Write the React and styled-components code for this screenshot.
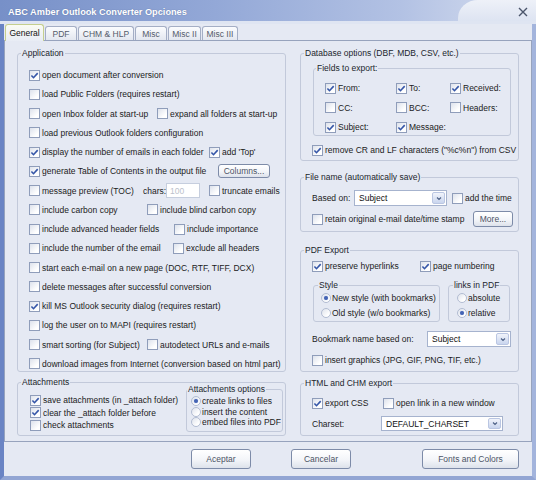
import React from 'react'
import styled, { createGlobalStyle } from 'styled-components'

const GlobalStyle = createGlobalStyle`
  html, body { margin: 0; padding: 0; background: #e5e9f3; }
  body {
    font-family: "Liberation Sans", Arial, sans-serif;
    font-size: 8.5px;
    color: #1b1b1b;
  }
`

const Window = styled.div`
  width: 536px;
  height: 480px;
  box-sizing: border-box;
  background: #e5e9f3;
  border-style: solid;
  border-width: 0 4px 4px 4px;
  border-color: #8fa3d3 #a3b4dc #92a5d3 #6a84c4;
  display: flex;
  flex-direction: column;
`

const TitleBar = styled.div`
  position: relative;
  height: 24px;
  flex-shrink: 0;
  margin: 0 -4px;
  padding: 2px 8px 0;
  box-sizing: border-box;
  display: flex;
  align-items: center;
  justify-content: space-between;
  overflow: hidden;
  background: linear-gradient(90deg, #7790c8 0%, #93a8d7 40%, #b3c2e4 75%, #c6d1ea 88%);
  border-bottom: 3px solid #dfe5f2;

  &::after {
    content: '';
    position: absolute;
    top: 0;
    right: 0;
    width: 78px;
    height: 24px;
    background: linear-gradient(180deg, #eef1f8, #dbe2f1);
    border-top-left-radius: 20px 18px;
  }
`

const Title = styled.span`
  position: relative;
  z-index: 1;
  color: #fff;
  font-size: 9.2px;
  font-weight: bold;
  text-shadow: 0 0 1px rgba(40, 60, 110, 0.5);
`

const Close = styled.svg`
  position: relative;
  z-index: 1;
`

const Tabs = styled.div`
  position: relative;
  z-index: 1;
  flex-shrink: 0;
  display: flex;
  align-items: flex-end;
  height: 16px;
  padding-left: 1px;
`

const Tab = styled.div`
  width: ${p => p.$w}px;
  height: ${p => (p.$active ? 17 : 14)}px;
  margin-right: 1px;
  margin-bottom: ${p => (p.$active ? -1 : 0)}px;
  box-sizing: border-box;
  display: flex;
  align-items: center;
  justify-content: center;
  border: 1px solid ${p => (p.$active ? '#c5cf8e' : '#a4aec5')};
  border-bottom: none;
  border-radius: 3px 3px 0 0;
  color: ${p => (p.$active ? '#111' : '#545b6a')};
  background: ${p => (p.$active
    ? 'linear-gradient(180deg, #fbfcf3, #e8ecf5)'
    : 'linear-gradient(180deg, #fbfcfe, #e3e7f0)')};
`

const Panel = styled.div`
  height: 402px;
  flex-shrink: 0;
  box-sizing: border-box;
  border: 1px solid #97a3bd;
  padding: 7px 12px 0;
  display: flex;
  gap: 14px;
`

const Column = styled.div`
  display: flex;
  flex-direction: column;
  width: ${p => (p.$w ? `${p.$w}px` : 'auto')};
  flex: ${p => (p.$w ? 'none' : 1)};
`

const Group = styled.fieldset`
  margin: ${p => p.$m || 0};
  padding: 0;
  height: ${p => p.$h}px;
  width: ${p => (p.$w ? `${p.$w}px` : 'auto')};
  box-sizing: border-box;
  border: 1px solid #c2c9da;
  border-radius: 3px;
  min-width: 0;
  flex-shrink: 0;
`

const Legend = styled.legend`
  margin-left: ${p => p.$ml ?? 3}px;
  padding: 0 1px;
  line-height: 10px;
  color: #1b1f2c;
`

const Body = styled.div`
  display: flex;
  flex-direction: ${p => (p.$row ? 'row' : 'column')};
  justify-content: ${p => (p.$row ? 'space-between' : 'flex-start')};
  align-items: flex-start;
  padding: ${p => p.$pad || 0};
  gap: ${p => p.$gap || 0}px;
`

const Row = styled.div`
  display: flex;
  align-items: center;
  height: ${p => p.$h || 14}px;
  margin-top: ${p => p.$mt || 0}px;
  flex-shrink: 0;
  white-space: nowrap;
`

const Item = styled.label`
  display: inline-flex;
  align-items: center;
  gap: ${p => p.$gap ?? 2}px;
  flex-shrink: 0;
  white-space: nowrap;
  width: ${p => (p.$w ? `${p.$w}px` : 'auto')};
  margin-left: ${p => p.$ml || 0}px;
`

const Box = styled.span`
  width: 11px;
  height: 11px;
  box-sizing: border-box;
  border: 1px solid #8f9dba;
  background: linear-gradient(135deg, #dde2ec, #ffffff 75%);
  display: flex;
  align-items: center;
  justify-content: center;
  flex-shrink: 0;
`

const Round = styled.span`
  width: 10px;
  height: 10px;
  box-sizing: border-box;
  border: 1px solid #b2bcd2;
  border-radius: 50%;
  background: linear-gradient(135deg, #dfe3ec, #ffffff 75%);
  display: flex;
  align-items: center;
  justify-content: center;
  flex-shrink: 0;
`

const Dot = styled.span`
  width: 4px;
  height: 4px;
  border-radius: 50%;
  background: #4464b4;
  box-shadow: 0 0 1px #8ea4dc;
`

const Text = styled.span`
  display: inline-block;
  width: ${p => (p.$w ? `${p.$w}px` : 'auto')};
  flex-shrink: 0;
`

const Select = styled.div`
  width: ${p => p.$w}px;
  height: ${p => p.$h || 16}px;
  box-sizing: border-box;
  border: 1px solid #a6b3ce;
  background: #fff;
  display: flex;
  align-items: center;
  justify-content: space-between;
  padding: 1px 1px 1px 4px;
  color: #111;
  flex-shrink: 0;
`

const SelectBtn = styled.span`
  width: 13px;
  height: 100%;
  box-sizing: border-box;
  border: 1px solid #bac6e2;
  border-radius: 2px;
  background: linear-gradient(180deg, #f1f4fb, #c9d5ee);
  display: flex;
  align-items: center;
  justify-content: center;
`

const Field = styled.div`
  width: ${p => p.$w}px;
  height: 15px;
  box-sizing: border-box;
  border: 1px solid #c6cede;
  background: #fff;
  color: #bcc1cb;
  padding-left: 3px;
  display: flex;
  align-items: center;
  flex-shrink: 0;
`

const Button = styled.div`
  width: ${p => p.$w}px;
  height: ${p => p.$h || 20}px;
  margin-left: ${p => p.$ml || 0}px;
  box-sizing: border-box;
  border: 1px solid #7d8ba8;
  border-radius: 3px;
  background: linear-gradient(180deg, #ffffff 0%, #f3f5f9 55%, #dde2eb 100%);
  color: #4b5365;
  display: flex;
  align-items: center;
  justify-content: center;
  flex-shrink: 0;
`

const Footer = styled.div`
  display: flex;
  flex-shrink: 0;
  padding: 7px 0 0 187px;
  height: 34px;
  box-sizing: border-box;
`

const Tick = () => (
  <svg width="9" height="9" viewBox="0 0 9 9">
    <path d="M1.4 4.5 L3.5 6.7 L7.7 2.1" fill="none" stroke="#3556a8" strokeWidth="1.6" />
  </svg>
)

const Check = ({ on, w, ml, children }) => (
  <Item $w={w} $ml={ml}>
    <Box>{on && <Tick />}</Box>
    <span>{children}</span>
  </Item>
)

const Radio = ({ on, children }) => (
  <Item $gap={1}>
    <Round>{on && <Dot />}</Round>
    <span>{children}</span>
  </Item>
)

const Dropdown = ({ w, h, children }) => (
  <Select $w={w} $h={h}>
    <span>{children}</span>
    <SelectBtn>
      <svg width="6" height="5" viewBox="0 0 6 5">
        <path d="M1 1.5 L3 3.5 L5 1.5" fill="none" stroke="#4d6186" strokeWidth="1.1" />
      </svg>
    </SelectBtn>
  </Select>
)

const tabs = [
  ['General', 39],
  ['PDF', 32],
  ['CHM & HLP', 56],
  ['Misc', 32],
  ['Misc II', 33],
  ['Misc III', 36],
]

export default function App() {
  return (
    <Window>
      <GlobalStyle />
      <TitleBar>
        <Title>ABC Amber Outlook Converter Opciones</Title>
        <Close width="10" height="10" viewBox="0 0 10 10">
          <path d="M1 1 L9 9 M9 1 L1 9" stroke="#4b556b" strokeWidth="1.4" />
        </Close>
      </TitleBar>

      <Tabs>
        {tabs.map(([t, w], i) => (
          <Tab key={t} $w={w} $active={i === 0}>{t}</Tab>
        ))}
      </Tabs>

      <Panel>
        <Column $w={269}>
          <Group $h={324}>
            <Legend>Application</Legend>
            <Body $pad="10px 0 0 11px" $gap={5.27}>
              <Row><Check on>open document after conversion</Check></Row>
              <Row><Check>load Public Folders (requires restart)</Check></Row>
              <Row>
                <Check w={128}>open Inbox folder at start-up</Check>
                <Check>expand all folders at start-up</Check>
              </Row>
              <Row><Check>load previous Outlook folders configuration</Check></Row>
              <Row>
                <Check on w={180}>display the number of emails in each folder</Check>
                <Check on>add 'Top'</Check>
              </Row>
              <Row>
                <Check on w={189}>generate Table of Contents in the output file</Check>
                <Button $w={52} $h={14}>Columns...</Button>
              </Row>
              <Row>
                <Check w={114}>message preview (TOC)</Check>
                <Text $w={23}>chars:</Text>
                <Field $w={34}>100</Field>
                <Check ml={9}>truncate emails</Check>
              </Row>
              <Row>
                <Check w={118}>include carbon copy</Check>
                <Check>include blind carbon copy</Check>
              </Row>
              <Row>
                <Check w={145}>include advanced header fields</Check>
                <Check>include importance</Check>
              </Row>
              <Row>
                <Check w={144}>include the number of the email</Check>
                <Check>exclude all headers</Check>
              </Row>
              <Row><Check>start each e-mail on a new page (DOC, RTF, TIFF, DCX)</Check></Row>
              <Row><Check>delete messages after successful conversion</Check></Row>
              <Row><Check on>kill MS Outlook security dialog (requires restart)</Check></Row>
              <Row><Check>log the user on to MAPI (requires restart)</Check></Row>
              <Row>
                <Check w={118}>smart sorting (for Subject)</Check>
                <Check>autodetect URLs and e-mails</Check>
              </Row>
              <Row><Check>download images from Internet (conversion based on html part)</Check></Row>
            </Body>
          </Group>

          <Group $h={59} $m="5px 0 0">
            <Legend>Attachments</Legend>
            <Body $row $pad="0 2px 0 12px">
              <Body $pad="7px 0 0">
                <Row $h={12.5}><Check on>save attachments (in _attach folder)</Check></Row>
                <Row $h={12.5}><Check on>clear the _attach folder before</Check></Row>
                <Row $h={12.5}><Check>check attachments</Check></Row>
              </Body>
              <Group $w={97} $h={48} $m="-3px 0 0">
                <Legend $ml={0}>Attachments options</Legend>
                <Body $pad="2px 0 0 4px">
                  <Row $h={10.5}><Radio on>create links to files</Radio></Row>
                  <Row $h={10.5}><Radio>insert the content</Radio></Row>
                  <Row $h={10.5}><Radio>embed files into PDF</Radio></Row>
                </Body>
              </Group>
            </Body>
          </Group>
        </Column>

        <Column>
          <Group $h={113}>
            <Legend>Database options (DBF, MDB, CSV, etc.)</Legend>
            <Group $h={73} $m="5px 7px 0 12px">
              <Legend $ml={2}>Fields to export:</Legend>
              <Body $pad="8px 0 0 11px" $gap={5.5}>
                <Row>
                  <Check on w={71}>From:</Check>
                  <Check on w={54}>To:</Check>
                  <Check on>Received:</Check>
                </Row>
                <Row>
                  <Check w={71}>CC:</Check>
                  <Check w={54}>BCC:</Check>
                  <Check>Headers:</Check>
                </Row>
                <Row>
                  <Check on w={71}>Subject:</Check>
                  <Check on>Message:</Check>
                </Row>
              </Body>
            </Group>
            <Body $pad="0 0 0 11px">
              <Row $mt={7}><Check on>remove CR and LF characters ("%c%n") from CSV</Check></Row>
            </Body>
          </Group>

          <Group $h={60} $m="11px 0 0">
            <Legend>File name (automatically save)</Legend>
            <Body $pad="8px 0 0 11px" $gap={5}>
              <Row $h={16}>
                <Text $w={42}>Based on:</Text>
                <Dropdown w={93}>Subject</Dropdown>
                <Check ml={5}>add the time</Check>
              </Row>
              <Row $h={16}>
                <Check w={161}>retain original e-mail date/time stamp</Check>
                <Button $w={40} $h={16}>More...</Button>
              </Row>
            </Body>
          </Group>

          <Group $h={127} $m="13px 0 0">
            <Legend>PDF Export</Legend>
            <Body $pad="4px 0 0 11px">
              <Row>
                <Check on w={108}>preserve hyperlinks</Check>
                <Check on>page numbering</Check>
              </Row>
              <Body $row $pad="7px 0 0 1px">
                <Group $w={127} $h={42}>
                  <Legend $ml={4}>Style</Legend>
                  <Body $pad="0.5px 0 0 7px">
                    <Row $h={15}><Radio on>New style (with bookmarks)</Radio></Row>
                    <Row $h={15}><Radio>Old style (w/o bookmarks)</Radio></Row>
                  </Body>
                </Group>
                <Group $w={62} $h={42} $m="0 0 0 8px">
                  <Legend $ml={4}>links in PDF</Legend>
                  <Body $pad="0.5px 0 0 8px">
                    <Row $h={15}><Radio>absolute</Radio></Row>
                    <Row $h={15}><Radio on>relative</Radio></Row>
                  </Body>
                </Group>
              </Body>
              <Row $h={16} $mt={9}>
                <Text $w={115}>Bookmark name based on:</Text>
                <Dropdown w={84}>Subject</Dropdown>
              </Row>
              <Row $mt={6}><Check>insert graphics (JPG, GIF, PNG, TIF, etc.)</Check></Row>
            </Body>
          </Group>

          <Group $h={58} $m="6px 0 0">
            <Legend>HTML and CHM export</Legend>
            <Body $pad="8px 0 0 11px">
              <Row>
                <Check on w={71}>export CSS</Check>
                <Check>open link in a new window</Check>
              </Row>
              <Row $h={15} $mt={6}>
                <Text $w={69}>Charset:</Text>
                <Dropdown w={122} h={15}>DEFAULT_CHARSET</Dropdown>
              </Row>
            </Body>
          </Group>
        </Column>
      </Panel>

      <Footer>
        <Button $w={60}>Aceptar</Button>
        <Button $w={60} $ml={40}>Cancelar</Button>
        <Button $w={97} $ml={71}>Fonts and Colors</Button>
      </Footer>
    </Window>
  )
}
